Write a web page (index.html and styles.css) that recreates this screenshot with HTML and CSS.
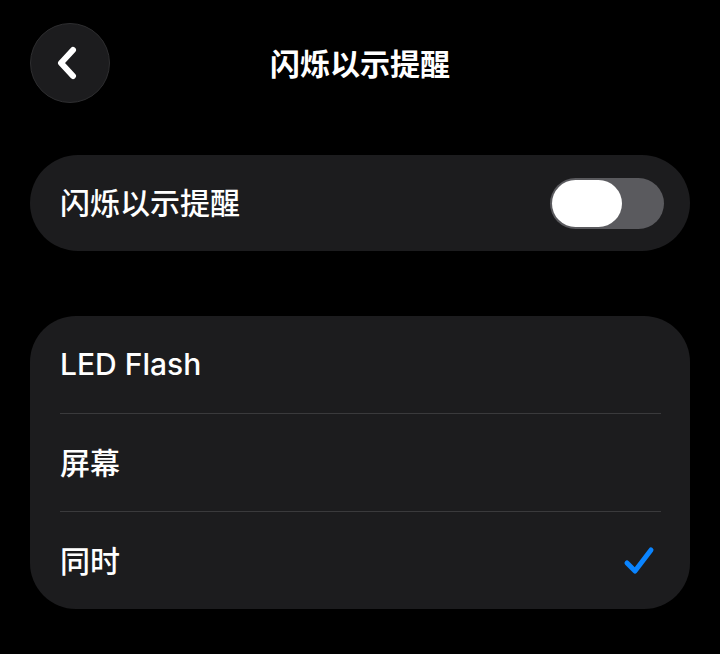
FILE: index.html
```html
<!doctype html>
<html lang="zh-CN">
	<head>
		<meta charset="UTF-8" />
		<meta name="viewport" content="width=device-width, initial-scale=1.0" />
		<title>闪烁以示提醒</title>
		<link rel="stylesheet" href="styles.css">
	</head>
	<body>
		<div class="header">
			<button class="back">
				<svg width="30" height="34" viewBox="0 0 30 34">
					<path d="M20 4 L8 17 L20 30" fill="none" stroke="#fff" stroke-width="6" stroke-linecap="round" stroke-linejoin="round" />
				</svg>
			</button>
			<h1 class="title">闪烁以示提醒</h1>
		</div>

		<div class="card single">
			<div class="row">
				<span class="label">闪烁以示提醒</span>
				<div class="toggle"><div class="knob"></div></div>
			</div>
		</div>

		<div class="card list">
			<div class="row">
				<span class="label latin">LED Flash</span>
			</div>
			<div class="row">
				<span class="label">屏幕</span>
			</div>
			<div class="row">
				<span class="label">同时</span>
				<svg class="check" width="32" height="30" viewBox="0 0 32 30">
					<path d="M4 17 L12 25 L28 4" fill="none" stroke="#0a84ff" stroke-width="5" stroke-linecap="round" stroke-linejoin="round" />
				</svg>
			</div>
		</div>
	</body>
</html>
```

FILE: styles.css
```css
body {
	margin: 0;
	background-color: #000;
	color: #fff;
	font-family: "Noto Sans CJK SC", "Noto Sans", sans-serif;
	width: 720px;
	height: 654px;
	overflow: hidden;
}
.header {
	position: relative;
	height: 126px;
	display: flex;
	align-items: center;
	justify-content: center;
}
.back {
	position: absolute;
	left: 30px;
	top: 23px;
	width: 80px;
	height: 80px;
	border-radius: 50%;
	background-color: #1c1c1e;
	border: 1.5px solid #2e2e30;
	display: flex;
	align-items: center;
	justify-content: center;
	padding: 0;
	padding-right: 4px;
}
.title {
	margin: 0;
	font-size: 30px;
	font-weight: 700;
	padding-bottom: 2px;
}
.card {
	margin: 0 30px;
	background-color: #1c1c1e;
}
.single {
	margin-top: 29px;
	height: 96px;
	border-radius: 48px;
	display: flex;
	align-items: center;
}
.single .row {
	width: 100%;
	padding: 0 26px 0 30px;
	display: flex;
	align-items: center;
	justify-content: space-between;
}
.label {
	font-size: 30px;
	font-weight: 500;
	line-height: 1;
	padding-bottom: 4px;
}
.latin {
	font-family: Inter, "Noto Sans", sans-serif;
	font-weight: 500;
	font-size: 30px;
	padding-bottom: 2px;
}
.toggle {
	width: 114px;
	height: 51px;
	border-radius: 26px;
	background-color: #5a5a5e;
	display: flex;
	align-items: center;
	padding: 0 2px;
	box-sizing: border-box;
}
.knob {
	width: 70px;
	height: 47px;
	border-radius: 24px;
	background-color: #fff;
}
.list {
	margin-top: 65px;
	border-radius: 46px;
	padding: 0 29px 0 30px;
}
.list .row {
	height: 97px;
	display: flex;
	align-items: center;
	justify-content: space-between;
	border-bottom: 1.5px solid #3a3a3c;
}
.list .row:last-child {
	border-bottom: 0;
}
.check {
	margin-right: 6px;
}
```
